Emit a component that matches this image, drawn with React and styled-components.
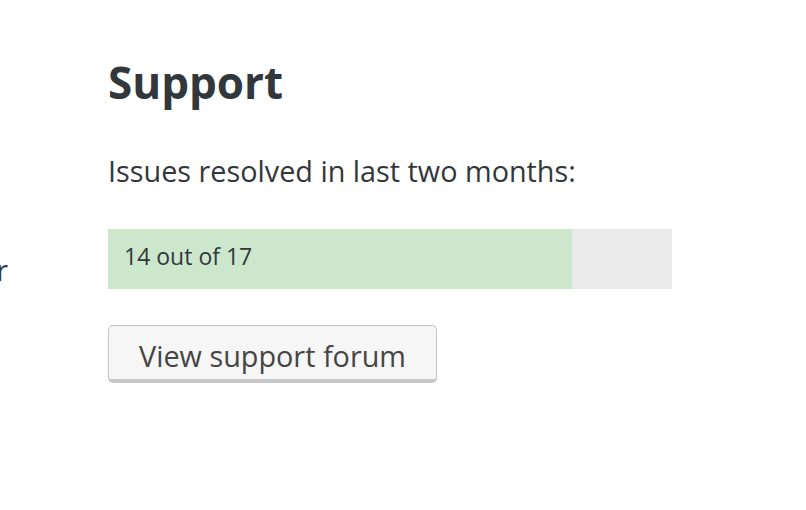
import React from 'react'
import styled, { createGlobalStyle } from 'styled-components'

const GlobalStyle = createGlobalStyle`
    html, body {
        margin: 0;
        padding: 0;
        background: #ffffff;
    }
    body {
        font-family: "Open Sans", "Noto Sans", sans-serif;
        color: #32373c;
    }
`

const Page = styled.div`
    display: flex;
    width: 806px;
    height: 510px;
    overflow: hidden;
`

// previous column, cut off by the left edge of the window
const SideColumn = styled.div`
    width: 8px;
    flex-shrink: 0;
    overflow: hidden;
    padding-top: 250px;
    display: flex;
    justify-content: flex-end;
`

const SideText = styled.span`
    font-size: 28.8px;
    line-height: 40px;
    white-space: nowrap;
    color: #32373c;
`

const Section = styled.section`
    margin-left: 100px;
    width: 564px;
    padding-top: 52px;
`

const Heading = styled.h2`
    margin: 0;
    font-size: 44px;
    font-weight: 700;
    line-height: 60px;
    color: #32373c;
`

const Lead = styled.p`
    margin: 39px 0 0;
    font-size: 28.8px;
    line-height: 40px;
`

const Bar = styled.div`
    position: relative;
    margin-top: 38px;
    height: 60px;
    box-sizing: border-box;
    padding-bottom: 6px;
    background: #ebebeb;
    display: flex;
    align-items: center;
`

const Fill = styled.div`
    position: absolute;
    top: 0;
    left: 0;
    bottom: 0;
    background: #cde7cd;
`

const BarLabel = styled.span`
    position: relative;
    padding-left: 16px;
    font-size: 23px;
    color: #32373c;
`

const Button = styled.button`
    display: block;
    margin-top: 36px;
    width: 329px;
    height: 58px;
    box-sizing: border-box;
    padding: 6px 0 0;
    border: 1px solid #c4c4c4;
    border-bottom: 4px solid #c8c8c8;
    border-radius: 5px;
    background: #f6f6f6;
    font-family: "Open Sans", "Noto Sans", sans-serif;
    font-size: 28.8px;
    line-height: 40px;
    color: #454545;
    cursor: pointer;
`

const resolved = 14
const total = 17

export default function App() {
    return (
        <>
            <GlobalStyle />
            <Page>
                <SideColumn>
                    <SideText>Number</SideText>
                </SideColumn>
                <Section>
                    <Heading>Support</Heading>
                    <Lead>Issues resolved in last two months:</Lead>
                    <Bar>
                        <Fill style={{ width: `${(resolved / total) * 100}%` }} />
                        <BarLabel>{resolved} out of {total}</BarLabel>
                    </Bar>
                    <Button>View support forum</Button>
                </Section>
            </Page>
        </>
    )
}
